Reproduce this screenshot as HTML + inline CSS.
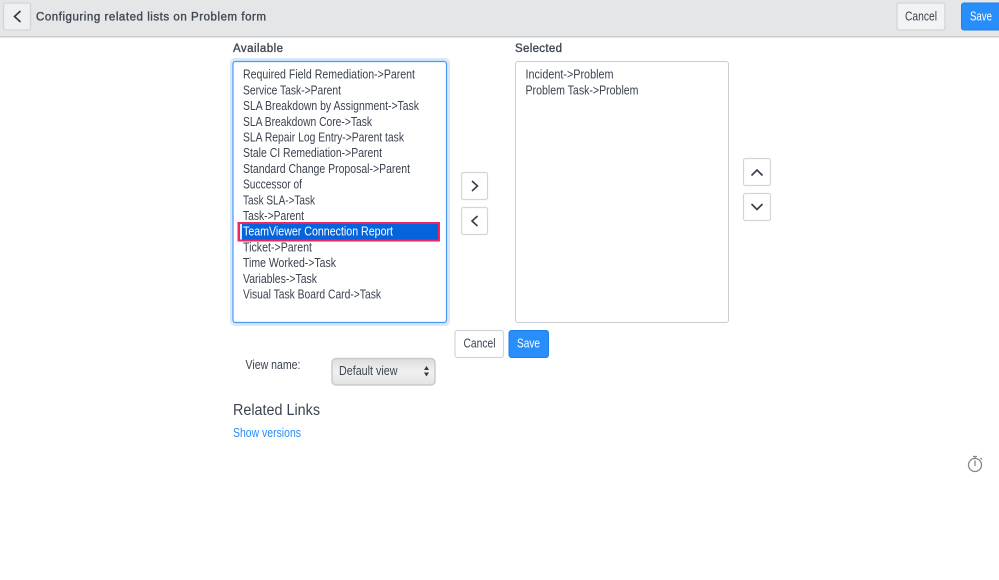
<!DOCTYPE html>
<html><head><meta charset="utf-8"><style>
html,body{margin:0;padding:0;background:#fff;width:999px;height:580px;overflow:hidden}
svg{display:block;font-family:"Liberation Sans",sans-serif;filter:blur(.3px)}
text{fill:#3b4350;font-size:12.5px}
.s{font-size:11.5px;fill:#3f4753;stroke:#3f4753;stroke-width:.35px}
</style></head><body>
<svg width="999" height="580" viewBox="0 0 999 580" xmlns="http://www.w3.org/2000/svg">
<defs>
<linearGradient id="sel" x1="0" y1="0" x2="0" y2="1"><stop offset="0" stop-color="#dcdcdc"/><stop offset=".5" stop-color="#f1f1f1"/><stop offset="1" stop-color="#e2e2e2"/></linearGradient>
</defs>
<rect x="0" y="0" width="999" height="36" fill="#e4e6e7"/>
<rect x="0" y="36" width="999" height="1.500" fill="#c9cbcd"/>
<rect x="3.500" y="3" width="27" height="27" rx="2" fill="#eff0f1" stroke="#d3d5d7" stroke-width="1.300"/>
<path d="M20.500 11 L14.500 16.500 L20.500 22" fill="none" stroke="#333c48" stroke-width="1.700"/>
<text x="36" y="20.500" class="s" textLength="230" lengthAdjust="spacing">Configuring related lists on Problem form</text>
<rect x="897" y="3" width="48" height="27" rx="2.500" fill="#f2f3f4" stroke="#d3d5d7" stroke-width="1.300"/>
<text x="905" y="20.500" textLength="32" lengthAdjust="spacingAndGlyphs">Cancel</text>
<rect x="961.500" y="3" width="45" height="27" rx="2.500" fill="#278efc" stroke="#1f7fe6"/>
<text x="970" y="20.500" style="fill:#fff" textLength="22" lengthAdjust="spacingAndGlyphs">Save</text>

<text x="233" y="52" class="s" textLength="50" lengthAdjust="spacing">Available</text>
<text x="515" y="52" class="s" textLength="47" lengthAdjust="spacing">Selected</text>

<rect x="231.500" y="59.500" width="217" height="265" rx="4" fill="none" stroke="#d6e8fd" stroke-width="3"/>
<rect x="233" y="61.500" width="213.500" height="261" rx="2.500" fill="#fff" stroke="#4a9af2" stroke-width="1.200"/>

<g>
<text x="243" y="78.700" textLength="172" lengthAdjust="spacingAndGlyphs">Required Field Remediation-&gt;Parent</text>
<text x="243" y="94.400" textLength="98" lengthAdjust="spacingAndGlyphs">Service Task-&gt;Parent</text>
<text x="243" y="110.100" textLength="176" lengthAdjust="spacingAndGlyphs">SLA Breakdown by Assignment-&gt;Task</text>
<text x="243" y="125.800" textLength="129" lengthAdjust="spacingAndGlyphs">SLA Breakdown Core-&gt;Task</text>
<text x="243" y="141.500" textLength="161" lengthAdjust="spacingAndGlyphs">SLA Repair Log Entry-&gt;Parent task</text>
<text x="243" y="157.200" textLength="139" lengthAdjust="spacingAndGlyphs">Stale CI Remediation-&gt;Parent</text>
<text x="243" y="172.900" textLength="167" lengthAdjust="spacingAndGlyphs">Standard Change Proposal-&gt;Parent</text>
<text x="243" y="188.600" textLength="59" lengthAdjust="spacingAndGlyphs">Successor of</text>
<text x="243" y="204.300" textLength="72" lengthAdjust="spacingAndGlyphs">Task SLA-&gt;Task</text>
<text x="243" y="220" textLength="61" lengthAdjust="spacingAndGlyphs">Task-&gt;Parent</text>
</g>
<rect x="237.500" y="222" width="202.500" height="19.500" fill="#f0245f"/>
<rect x="240" y="224" width="198" height="15.500" fill="#0564dc"/>
<rect x="240" y="224" width="2" height="15.500" fill="#dfe9f7"/>
<text x="243" y="235.700" style="fill:#fff" textLength="150" lengthAdjust="spacingAndGlyphs">TeamViewer Connection Report</text>
<g>
<text x="243" y="251.400" textLength="69" lengthAdjust="spacingAndGlyphs">Ticket-&gt;Parent</text>
<text x="243" y="267.100" textLength="93" lengthAdjust="spacingAndGlyphs">Time Worked-&gt;Task</text>
<text x="243" y="282.800" textLength="74" lengthAdjust="spacingAndGlyphs">Variables-&gt;Task</text>
<text x="243" y="298.500" textLength="138" lengthAdjust="spacingAndGlyphs">Visual Task Board Card-&gt;Task</text>
</g>

<rect x="515.500" y="61.500" width="213" height="261" rx="2.500" fill="#fff" stroke="#c9ccd0"/>
<text x="525.500" y="78.700" textLength="88" lengthAdjust="spacingAndGlyphs">Incident-&gt;Problem</text>
<text x="525.500" y="94.400" textLength="113" lengthAdjust="spacingAndGlyphs">Problem Task-&gt;Problem</text>

<g fill="#fff" stroke="#d3d5d9" stroke-width="1.200">
<rect x="461.500" y="172.500" width="26" height="27" rx="2"/>
<rect x="461.500" y="207.500" width="26" height="27" rx="2"/>
<rect x="743.500" y="158.500" width="27" height="27" rx="2"/>
<rect x="743.500" y="193.500" width="27" height="27" rx="2"/>
</g>
<g fill="none" stroke="#333c48" stroke-width="1.600">
<path d="M472 181 L477.500 186 L472 191"/>
<path d="M477.500 216 L472 221 L477.500 226"/>
<path d="M751.500 175.500 L757 170 L762.500 175.500"/>
<path d="M751.500 204 L757 209.500 L762.500 204"/>
</g>

<rect x="455" y="330.500" width="48.500" height="27" rx="2.500" fill="#fff" stroke="#d3d5d9" stroke-width="1.200"/>
<text x="463.500" y="347.700" textLength="32" lengthAdjust="spacingAndGlyphs">Cancel</text>
<rect x="509" y="330.500" width="39.500" height="27" rx="2.500" fill="#278efc" stroke="#1f7fe6"/>
<text x="517" y="347.700" style="fill:#fff" textLength="23" lengthAdjust="spacingAndGlyphs">Save</text>

<text x="245.500" y="369.200" textLength="55" lengthAdjust="spacingAndGlyphs">View name:</text>
<rect x="332" y="358.500" width="103" height="26.500" rx="4" fill="url(#sel)" stroke="#c9cbcd" stroke-width="1.500"/>
<text x="339" y="375.200" textLength="58.500" lengthAdjust="spacingAndGlyphs">Default view</text>
<path d="M424 370 L426.500 366 L429 370 Z M424 372.500 L429 372.500 L426.500 376.500 Z" fill="#333c48"/>

<text x="233" y="415" style="font-size:15.500px" textLength="87" lengthAdjust="spacingAndGlyphs">Related Links</text>
<text x="233" y="437.200" style="fill:#278efc" textLength="68" lengthAdjust="spacingAndGlyphs">Show versions</text>

<g fill="none" stroke="#84888d" stroke-width="1.300">
<circle cx="975" cy="465" r="6.500"/>
<path d="M975 460.500 V466"/>
<path d="M973 456.500 H977"/>
<path d="M975 456.500 V458.500"/>
<path d="M980.500 458 L982 459.500"/>
</g>
</svg>
</body></html>
